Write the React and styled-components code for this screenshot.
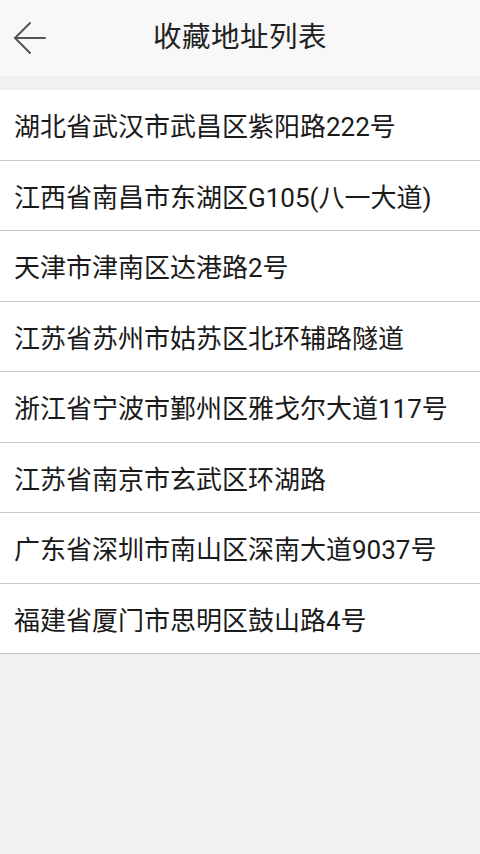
import React from 'react'
import styled, { createGlobalStyle } from 'styled-components'

const GlobalStyle = createGlobalStyle`
  html, body {
    margin: 0;
    padding: 0;
    background: #f1f1f1;
  }
  body {
    font-family: Roboto, "Noto Sans CJK SC", "Liberation Sans", sans-serif;
  }
`

const Page = styled.div`
  min-height: 854px;
  background: #f1f1f1;
  display: flex;
  flex-direction: column;
`

const Header = styled.header`
  height: 76px;
  background: #f8f8f8;
  display: grid;
  grid-template-columns: 76px 1fr 76px;
  align-items: center;
`

const BackButton = styled.button`
  border: 0;
  background: none;
  padding: 0 0 0 13px;
  height: 76px;
  display: flex;
  align-items: center;
  cursor: pointer;
`

const Title = styled.h1`
  margin: 0;
  text-align: center;
  font-size: 28.5px;
  font-weight: 400;
  color: #222;
  letter-spacing: 0.5px;
  line-height: 1;
`

const List = styled.ul`
  list-style: none;
  margin: 14px 0 0;
  padding: 0;
  background: #fff;
`

const Row = styled.li`
  height: 69.5px;
  border-bottom: 1px solid #c8c8c8;
  display: flex;
  align-items: center;
  padding-left: 14px;
  font-size: 26px;
  color: #1a1a1a;
  white-space: nowrap;
`

const addresses = [
  '湖北省武汉市武昌区紫阳路222号',
  '江西省南昌市东湖区G105(八一大道)',
  '天津市津南区达港路2号',
  '江苏省苏州市姑苏区北环辅路隧道',
  '浙江省宁波市鄞州区雅戈尔大道117号',
  '江苏省南京市玄武区环湖路',
  '广东省深圳市南山区深南大道9037号',
  '福建省厦门市思明区鼓山路4号',
]

const BackArrow = () => (
  <svg width="34" height="34" viewBox="0 0 34 34" fill="none" stroke="#555" strokeWidth="2" strokeLinecap="round">
    <path d="M2 17 H32" />
    <path d="M17 2 L2 17 L17 32" />
  </svg>
)

export default function App() {
  return (
    <Page>
      <GlobalStyle />
      <Header>
        <BackButton aria-label="返回">
          <BackArrow />
        </BackButton>
        <Title>收藏地址列表</Title>
        <span />
      </Header>
      <List>
        {addresses.map(a => (
          <Row key={a}>{a}</Row>
        ))}
      </List>
    </Page>
  )
}
